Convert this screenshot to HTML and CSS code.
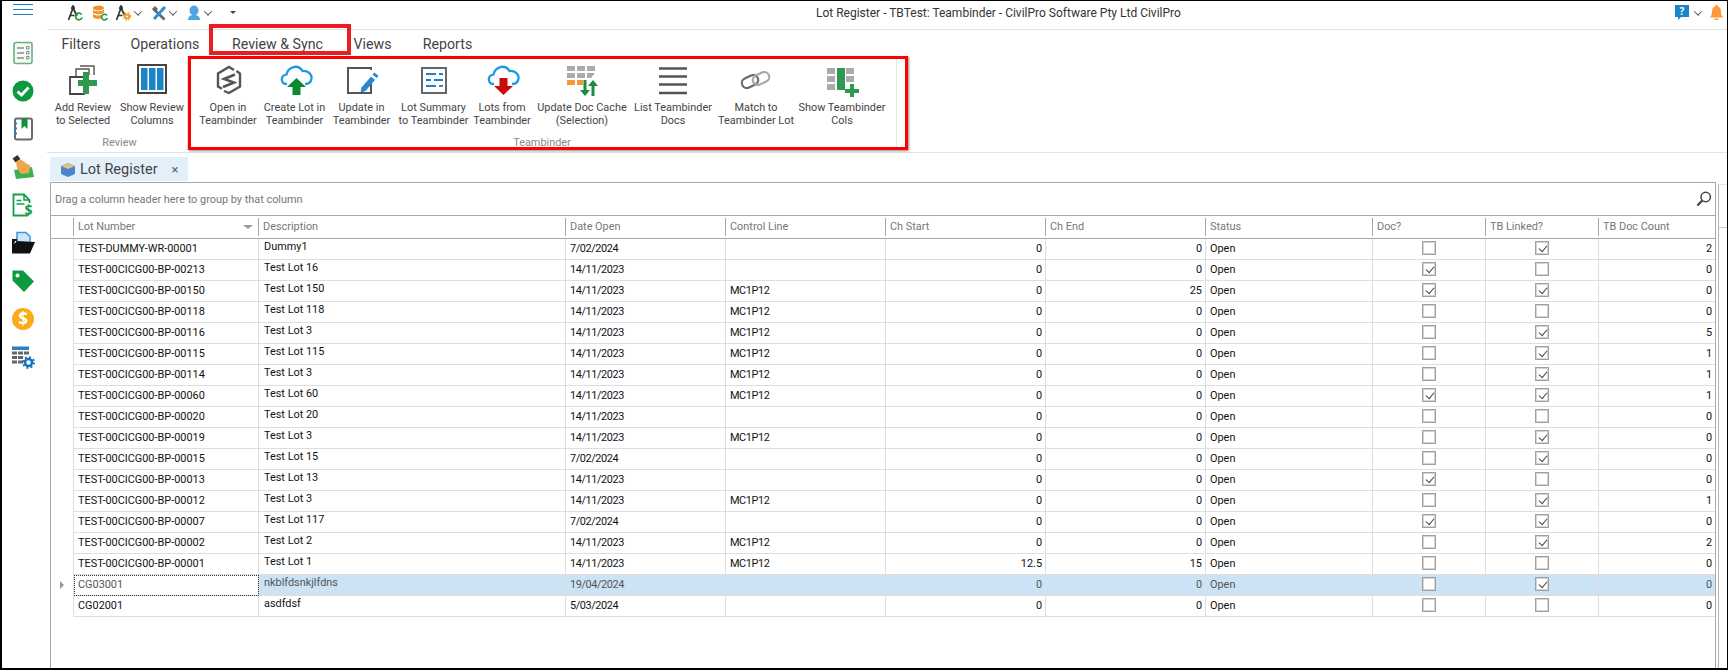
FILE: index.html
```html
<!DOCTYPE html>
<html lang="en">
<head>
<meta charset="utf-8">
<title>Lot Register</title>
<link rel="stylesheet" href="styles.css">
</head>
<body>
<div class="app">
  <aside class="side">
    <div class="burger"><i></i><i></i><i></i></div>
    <div class="nav">
      <svg viewBox="0 0 24 24"><rect x="3" y="1.500" width="18" height="21" rx="2" fill="#f4faf5" stroke="#6cb07e" stroke-width="1.600"/><path d="M6 7h7M6 12h7M6 17h7" stroke="#8a8a8a" stroke-width="1.400"/><path d="M15.500 5.500h2.500v2.500h-2.500zM15.500 10.500h2.500v2.500h-2.500zM15.500 15.500h2.500v2.500h-2.500z" fill="none" stroke="#8a8a8a"/></svg>
    </div>
    <div class="nav">
      <svg viewBox="0 0 24 24"><circle cx="12" cy="12" r="10.500" fill="#0d9a3f"/><path d="M6.500 12.500l4 3.500 7-7.500" fill="none" stroke="#fff" stroke-width="2.800"/></svg>
    </div>
    <div class="nav">
      <svg viewBox="0 0 24 24"><rect x="4" y="1.500" width="17" height="21" rx="2" fill="#fff" stroke="#6a6a6a" stroke-width="2"/><path d="M10.500 2h6v10l-3-3-3 3z" fill="#0d8f3c"/><path d="M3 6.500h3M3 11.500h3M3 16.500h3" stroke="#2a7fc0" stroke-width="2"/></svg>
    </div>
    <div class="nav">
      <svg viewBox="0 0 24 24"><path d="M3 15l18-3 2 10-18 2z" fill="#3bb04f"/><path d="M1.500 3.500L6.500 0l3 4-5 3.500z" fill="#333"/><path d="M5 7l5-2.500 6 4.500 3 1-1 8-8 1-4-6z" fill="#f3a54c"/></svg>
    </div>
    <div class="nav">
      <svg viewBox="0 0 24 24"><path d="M16 20.500v2H2.500V1.500h10.500l5.500 5.500v3" fill="none" stroke="#12a04a" stroke-width="1.800"/><path d="M13 1.500v5.500h5.500" fill="none" stroke="#12a04a" stroke-width="1.500"/><path d="M5.500 7.500h5M5.500 11h8" stroke="#12a04a" stroke-width="1.600"/><text x="13.500" y="21.500" class="dollar-small">$</text></svg>
    </div>
    <div class="nav">
      <svg viewBox="0 0 24 24"><path d="M6 1.500h9l4 4v9H6z" fill="#cfe6f8" stroke="#3f97dc" stroke-width="1.500"/><path d="M1 8h5v2h-2l-1 3 3-3 18 1-5 11.500H1z" fill="#111"/></svg>
    </div>
    <div class="nav">
      <svg viewBox="0 0 24 24"><path d="M1.500 1.500h10.500l11 11-10 10.500-11.500-11.500z" fill="#0d9a3f"/><circle cx="6.500" cy="6.500" r="2" fill="#fff"/></svg>
    </div>
    <div class="nav">
      <svg viewBox="0 0 24 24"><circle cx="12" cy="12" r="11" fill="#fbab18"/><text x="12" y="17.500" class="dollar">$</text></svg>
    </div>
    <div class="nav">
      <svg viewBox="0 0 24 24"><path d="M1 1.500h17v3.500H1z" fill="#2a7fc0"/><path d="M1 6.500h5v3H1zM7 6.500h5v3H7zM13 6.500h5v3h-5zM1 11h5v3H1zM7 11h5v3H7zM1 15.500h5v3H1zM7 15.500h5v3H7z" fill="#666"/><circle cx="17.500" cy="17.500" r="3.500" fill="none" stroke="#1673c4" stroke-width="2.600"/><circle cx="17.500" cy="17.500" r="5.500" fill="none" stroke="#1673c4" stroke-width="1.800" stroke-dasharray="2 2.300"/></svg>
    </div>
  </aside>

  <main class="main">
    <header class="titlebar">
      <div class="qat">
        <svg class="q q-a" viewBox="0 0 16 16"><path d="M6 3L1.500 15M6 3l4 8M3.500 10.500h4" fill="none" stroke="#333" stroke-width="1.700"/><path d="M6 0v3" stroke="#333" stroke-width="1.500"/><circle cx="6" cy="3" r="2" fill="#333"/><path d="M14.500 9.500a3.300 3.300 0 1 0 .5 3" fill="none" stroke="#1a9a3f" stroke-width="1.700"/></svg>
        <svg class="q q-b" viewBox="0 0 16 16"><ellipse cx="6.500" cy="3" rx="5.500" ry="2.500" fill="#f0932c"/><path d="M1 4v3c0 3 11 3 11 0V4c0 3-11 3-11 0zM1 8.500v3c0 2.500 6 3 8 2V10c-3 1-8 .5-8-1.500z" fill="#f0932c"/><path d="M15 10.500a2.900 2.900 0 1 0 .3 2.500" fill="none" stroke="#1a9a3f" stroke-width="1.500"/></svg>
        <svg class="q q-c" viewBox="0 0 16 16"><path d="M6 3L1.500 15M6 3l3.500 7M3.500 10.500h4" fill="none" stroke="#333" stroke-width="1.700"/><path d="M6 0v3" stroke="#333" stroke-width="1.500"/><circle cx="6" cy="3" r="2" fill="#333"/><circle cx="12" cy="11.500" r="2" fill="none" stroke="#f0a020" stroke-width="2"/><circle cx="12" cy="11.500" r="3.700" fill="none" stroke="#f0a020" stroke-width="1.200" stroke-dasharray="1.500 1.500"/></svg>
        <i class="chev chev-c"></i>
        <svg class="q q-d" viewBox="0 0 16 16"><path d="M2.500 4l11 10.500" stroke="#666" stroke-width="2.600"/><path d="M1 4l3-3 3 3-3 3z" fill="#666"/><path d="M13 3L3 14" stroke="#2a8fd6" stroke-width="2.800"/><path d="M10 4l3-3 2 2-3 3z" fill="#2a8fd6"/></svg>
        <i class="chev"></i>
        <svg class="q q-e" viewBox="0 0 16 16"><ellipse cx="8" cy="5.500" rx="4.500" ry="5" fill="#4fa5e2"/><path d="M2 15c0-4 3-5 6-5s6 1 6 5z" fill="#4fa5e2"/></svg>
        <i class="chev"></i>
        <i class="drop"></i>
      </div>
      <div class="title">Lot Register - TBTest: Teambinder - CivilPro Software Pty Ltd CivilPro</div>
      <div class="sys">
        <svg class="help" viewBox="0 0 14 16"><path d="M0 0h14v12H6l-3 3v-3H0z" fill="#1c85c8"/><text x="7" y="10" class="qmark">?</text></svg>
        <i class="chev"></i>
        <svg class="bell" viewBox="0 0 13 15"><path d="M6.500 0c1 0 1.500.7 1.500 1.400C10.500 2 11 4.500 11 7c0 2.500.8 4 2 5.500H0C1.200 11 2 9.500 2 7c0-2.500.5-5 3-5.600C5 .7 5.500 0 6.500 0z" fill="#ff9a3c"/><path d="M4.500 13.500h4V15h-4z" fill="#ff9a3c"/></svg>
      </div>
    </header>

    <nav class="tabs">
      <span class="tab t1">Filters</span>
      <span class="tab t2">Operations</span>
      <span class="tab t3">Review &amp; Sync</span>
      <span class="tab t4">Views</span>
      <span class="tab t5">Reports</span>
    </nav>

    <section class="ribbon">
      <div class="group g1">
        <div class="btns">
          <div class="btn w70">
            <svg viewBox="0 0 36 34"><path d="M11 15V6h13v6" fill="none" stroke="#555" stroke-width="1.400"/><path d="M15 3h14v9" fill="none" stroke="#555" stroke-width="1.400"/><path d="M5 14h14v17H5z" fill="#fff" stroke="#444" stroke-width="1.800"/><path d="M18 9h6v8h8v6h-8v8h-6v-8h-5v-6h5z" fill="#2f9a4f"/></svg>
            <span>Add Review<br>to Selected</span>
          </div>
          <div class="btn w68">
            <svg viewBox="0 0 36 34"><rect x="4" y="2" width="28" height="28" fill="#fff" stroke="#444" stroke-width="2"/><path d="M7 5h6.500v22H7zM15 5h6.500v22H15zM23 5h6.500v22H23z" fill="#1c85c8"/></svg>
            <span>Show Review<br>Columns</span>
          </div>
        </div>
        <div class="glabel">Review</div>
      </div>
      <div class="group g2">
        <div class="btns">
          <div class="btn w66">
            <svg viewBox="0 0 36 34"><path d="M24 7L19 4 8 10.500v13l4 2.300M14 28l5 2 11-6.500v-13L26.500 8" fill="none" stroke="#555" stroke-width="2.400"/><path d="M25 11.500l-11 4.500 10 3.500-11 4.500" fill="none" stroke="#555" stroke-width="2.600"/></svg>
            <span>Open in<br>Teambinder</span>
          </div>
          <div class="btn w67">
            <svg viewBox="0 0 36 34"><path d="M10 21C4 21 2.500 13 9.500 11.500 11 4 21 .5 25.500 8 31 7.500 35 11 34.500 15.500 34 19 31.500 21 28 21" fill="none" stroke="#1b9ae4" stroke-width="2.300"/><path d="M19.500 15L29 24h-5.500v8h-8v-8H10z" fill="#0a8a2e"/></svg>
            <span>Create Lot in<br>Teambinder</span>
          </div>
          <div class="btn w67">
            <svg viewBox="0 0 36 34"><path d="M27 7V5H4v25h23v-9" fill="none" stroke="#555" stroke-width="2"/><path d="M17.500 24.500l9.500-11 4 3.500-9.500 11-5 1.500z" fill="#2a86d0"/><path d="M28.500 11.500l2-2 4 3.500-2 2z" fill="#2a86d0"/></svg>
            <span>Update in<br>Teambinder</span>
          </div>
          <div class="btn w77">
            <svg viewBox="0 0 36 34"><rect x="6" y="5" width="24" height="25" fill="#fff" stroke="#666" stroke-width="2"/><path d="M10 11h10M23 11h4M10 17h5M18 17h9M10 23h10" stroke="#1c7fd0" stroke-width="2"/><path d="M23 23h4" stroke="#777" stroke-width="2"/></svg>
            <span>Lot Summary<br>to Teambinder</span>
          </div>
          <div class="btn w60">
            <svg viewBox="0 0 36 34"><path d="M10 21C4 21 2.500 13 9.500 11.500 11 4 21 .5 25.500 8 31 7.500 35 11 34.500 15.500 34 19 31.500 21 28 21" fill="none" stroke="#1b9ae4" stroke-width="2.300"/><path d="M15.500 15h8v8H29l-9.500 9L10 23h5.500z" fill="#c80b0b"/></svg>
            <span>Lots from<br>Teambinder</span>
          </div>
          <div class="btn w100">
            <svg viewBox="0 0 36 34"><path d="M3 3h8v5H3zM13 3h8v5h-8zM23 3h8v5h-8zM3 10h8v5H3zM13 10h8v5h-8zM23 10h8l-4 5h-4z" fill="#ababab"/><path d="M3 17h8v5H3zM13 17h6v5h-6z" fill="#f39a35"/><path d="M19.500 17h3v10h3.500l-5 6-5-6h3.500z" fill="#1e8a45"/><path d="M29 17l5 6h-3.500v10h-3V23H24z" fill="#1e8a45"/></svg>
            <span>Update Doc Cache<br>(Selection)</span>
          </div>
          <div class="btn w82">
            <svg viewBox="0 0 36 34"><path d="M4 5.500h28M4 13.500h28M4 21.500h28M4 30h28" stroke="#555" stroke-width="2.600"/></svg>
            <span>List Teambinder<br>Docs</span>
          </div>
          <div class="btn w84">
            <svg viewBox="0 0 36 34"><rect x="3.500" y="13.500" width="17" height="10" rx="5" transform="rotate(-25 12 18.500)" fill="none" stroke="#6a6a6a" stroke-width="2.200"/><rect x="14.500" y="10.500" width="17" height="10" rx="5" transform="rotate(-25 23 15.500)" fill="none" stroke="#a8a8a8" stroke-width="2.200"/></svg>
            <span>Match to<br>Teambinder Lot</span>
          </div>
          <div class="btn w88">
            <svg viewBox="0 0 36 34"><path d="M3 5h8v6H3zM3 13h8v6H3zM3 21h8v6H3zM22 5h8v6h-8zM22 13h8v6h-8z" fill="#ababab"/><path d="M13 5h8v22h-8z" fill="#2f9a4f"/><path d="M26 21h4v5h5v4h-5v4h-4v-4h-5v-4h5z" fill="#2f9a4f"/></svg>
            <span>Show Teambinder<br>Cols</span>
          </div>
        </div>
        <div class="glabel">Teambinder</div>
      </div>
    </section>

    <div class="doctab">
      <svg viewBox="0 0 16 16"><path d="M1 5l7-3 7 3v8l-7 3-7-3z" fill="#4f82c8"/><path d="M1 5l7-3 7 3-7 3z" fill="#d8c58c"/></svg>
      <span class="doctab-t">Lot Register</span>
      <span class="doctab-x">×</span>
    </div>

    <div class="work">
      <div class="grid">
        <div class="grouppanel">
          <span>Drag a column header here to group by that column</span>
          <svg class="search" viewBox="0 0 16 16"><circle cx="9.700" cy="6" r="4.700" fill="none" stroke="#444" stroke-width="1.500"/><path d="M6.200 9.500L1.500 14.500" stroke="#444" stroke-width="2.200"/></svg>
        </div>
        <table class="tbl">
          <colgroup>
            <col class="c-ind"><col class="c-lot"><col class="c-desc"><col class="c-160"><col class="c-160"><col class="c-160"><col class="c-160"><col class="c-stat"><col class="c-cb"><col class="c-cb"><col class="c-count">
          </colgroup>
          <thead>
            <tr>
              <th><div class="hc hc-full"></div></th>
              <th><div class="hc">Lot Number<i class="sort"></i></div></th>
              <th><div class="hc">Description</div></th>
              <th><div class="hc">Date Open</div></th>
              <th><div class="hc">Control Line</div></th>
              <th><div class="hc">Ch Start</div></th>
              <th><div class="hc">Ch End</div></th>
              <th><div class="hc">Status</div></th>
              <th><div class="hc">Doc?</div></th>
              <th><div class="hc">TB Linked?</div></th>
              <th><div class="hc hc-last">TB Doc Count</div></th>
            </tr>
          </thead>
          <tbody>
            <tr><td class="ind"></td><td>TEST-DUMMY-WR-00001</td><td class="d"><span>Dummy1</span></td><td>7/02/2024</td><td></td><td class="n">0</td><td class="n">0</td><td>Open</td><td class="c"><i class="cb"></i></td><td class="c"><i class="cb on"></i></td><td class="n">2</td></tr>
            <tr><td class="ind"></td><td>TEST-00CICG00-BP-00213</td><td class="d"><span>Test Lot 16</span></td><td>14/11/2023</td><td></td><td class="n">0</td><td class="n">0</td><td>Open</td><td class="c"><i class="cb on"></i></td><td class="c"><i class="cb"></i></td><td class="n">0</td></tr>
            <tr><td class="ind"></td><td>TEST-00CICG00-BP-00150</td><td class="d"><span>Test Lot 150</span></td><td>14/11/2023</td><td>MC1P12</td><td class="n">0</td><td class="n">25</td><td>Open</td><td class="c"><i class="cb on"></i></td><td class="c"><i class="cb on"></i></td><td class="n">0</td></tr>
            <tr><td class="ind"></td><td>TEST-00CICG00-BP-00118</td><td class="d"><span>Test Lot 118</span></td><td>14/11/2023</td><td>MC1P12</td><td class="n">0</td><td class="n">0</td><td>Open</td><td class="c"><i class="cb"></i></td><td class="c"><i class="cb"></i></td><td class="n">0</td></tr>
            <tr><td class="ind"></td><td>TEST-00CICG00-BP-00116</td><td class="d"><span>Test Lot 3</span></td><td>14/11/2023</td><td>MC1P12</td><td class="n">0</td><td class="n">0</td><td>Open</td><td class="c"><i class="cb"></i></td><td class="c"><i class="cb on"></i></td><td class="n">5</td></tr>
            <tr><td class="ind"></td><td>TEST-00CICG00-BP-00115</td><td class="d"><span>Test Lot 115</span></td><td>14/11/2023</td><td>MC1P12</td><td class="n">0</td><td class="n">0</td><td>Open</td><td class="c"><i class="cb"></i></td><td class="c"><i class="cb on"></i></td><td class="n">1</td></tr>
            <tr><td class="ind"></td><td>TEST-00CICG00-BP-00114</td><td class="d"><span>Test Lot 3</span></td><td>14/11/2023</td><td>MC1P12</td><td class="n">0</td><td class="n">0</td><td>Open</td><td class="c"><i class="cb"></i></td><td class="c"><i class="cb on"></i></td><td class="n">1</td></tr>
            <tr><td class="ind"></td><td>TEST-00CICG00-BP-00060</td><td class="d"><span>Test Lot 60</span></td><td>14/11/2023</td><td>MC1P12</td><td class="n">0</td><td class="n">0</td><td>Open</td><td class="c"><i class="cb on"></i></td><td class="c"><i class="cb on"></i></td><td class="n">1</td></tr>
            <tr><td class="ind"></td><td>TEST-00CICG00-BP-00020</td><td class="d"><span>Test Lot 20</span></td><td>14/11/2023</td><td></td><td class="n">0</td><td class="n">0</td><td>Open</td><td class="c"><i class="cb"></i></td><td class="c"><i class="cb"></i></td><td class="n">0</td></tr>
            <tr><td class="ind"></td><td>TEST-00CICG00-BP-00019</td><td class="d"><span>Test Lot 3</span></td><td>14/11/2023</td><td>MC1P12</td><td class="n">0</td><td class="n">0</td><td>Open</td><td class="c"><i class="cb"></i></td><td class="c"><i class="cb on"></i></td><td class="n">0</td></tr>
            <tr><td class="ind"></td><td>TEST-00CICG00-BP-00015</td><td class="d"><span>Test Lot 15</span></td><td>7/02/2024</td><td></td><td class="n">0</td><td class="n">0</td><td>Open</td><td class="c"><i class="cb"></i></td><td class="c"><i class="cb on"></i></td><td class="n">0</td></tr>
            <tr><td class="ind"></td><td>TEST-00CICG00-BP-00013</td><td class="d"><span>Test Lot 13</span></td><td>14/11/2023</td><td></td><td class="n">0</td><td class="n">0</td><td>Open</td><td class="c"><i class="cb on"></i></td><td class="c"><i class="cb"></i></td><td class="n">0</td></tr>
            <tr><td class="ind"></td><td>TEST-00CICG00-BP-00012</td><td class="d"><span>Test Lot 3</span></td><td>14/11/2023</td><td>MC1P12</td><td class="n">0</td><td class="n">0</td><td>Open</td><td class="c"><i class="cb"></i></td><td class="c"><i class="cb on"></i></td><td class="n">1</td></tr>
            <tr><td class="ind"></td><td>TEST-00CICG00-BP-00007</td><td class="d"><span>Test Lot 117</span></td><td>7/02/2024</td><td></td><td class="n">0</td><td class="n">0</td><td>Open</td><td class="c"><i class="cb on"></i></td><td class="c"><i class="cb on"></i></td><td class="n">0</td></tr>
            <tr><td class="ind"></td><td>TEST-00CICG00-BP-00002</td><td class="d"><span>Test Lot 2</span></td><td>14/11/2023</td><td>MC1P12</td><td class="n">0</td><td class="n">0</td><td>Open</td><td class="c"><i class="cb"></i></td><td class="c"><i class="cb on"></i></td><td class="n">2</td></tr>
            <tr><td class="ind"></td><td>TEST-00CICG00-BP-00001</td><td class="d"><span>Test Lot 1</span></td><td>14/11/2023</td><td>MC1P12</td><td class="n">12.5</td><td class="n">15</td><td>Open</td><td class="c"><i class="cb"></i></td><td class="c"><i class="cb"></i></td><td class="n">0</td></tr>
            <tr class="sel"><td class="ind"><i class="rowptr"></i></td><td class="focus">CG03001</td><td class="d"><span>nkblfdsnkjlfdns</span></td><td>19/04/2024</td><td></td><td class="n">0</td><td class="n">0</td><td>Open</td><td class="c"><i class="cb"></i></td><td class="c"><i class="cb on"></i></td><td class="n">0</td></tr>
            <tr><td class="ind"></td><td>CG02001</td><td class="d"><span>asdfdsf</span></td><td>5/03/2024</td><td></td><td class="n">0</td><td class="n">0</td><td>Open</td><td class="c"><i class="cb"></i></td><td class="c"><i class="cb"></i></td><td class="n">0</td></tr>
          </tbody>
        </table>
      </div>
      <div class="rail"><div class="rail-top"></div></div>
    </div>
  </main>

  <div class="mark mark-tab"></div>
  <div class="mark mark-group"></div>
</div>
</body>
</html>
```

FILE: styles.css
```css
* { box-sizing: border-box; }
html, body { margin: 0; padding: 0; }
body { width: 1728px; height: 670px; overflow: hidden; background: #000; font-family: Roboto, "Open Sans", "Liberation Sans", sans-serif; font-size: 10.900px; color: #111; }

.app { position: relative; height: 667px; margin: 1px 0 0 2px; width: 1725px; background: #fff; display: flex; }

.side { width: 45px; flex: none; padding-right: 3px; display: flex; flex-direction: column; align-items: center; }
.burger { height: 33px; width: 100%; padding: 3px 0 0 11px; }
.burger i { display: block; width: 20px; height: 1px; background: #1c7fc7; margin-bottom: 4px; }
.nav { height: 38px; flex: none; display: flex; align-items: center; justify-content: center; }
.nav svg { width: 24px; height: 24px; display: block; }
.dollar { font: 700 17px "Open Sans", sans-serif; fill: #fff; text-anchor: middle; }
.dollar-small { font: 700 14px "Open Sans", sans-serif; fill: #12a04a; }

.main { flex: 1; min-width: 0; display: flex; flex-direction: column; }

.titlebar { height: 29px; flex: none; border-bottom: 1px solid #e2e2e2; display: flex; align-items: center; padding-bottom: 5px; position: relative; }
.qat { display: flex; align-items: center; padding-left: 20px; width: 769px; flex: none; }
.q { width: 16px; height: 16px; display: block; flex: none; }
.q-b { margin-left: 9px; }
.q-c { margin-left: 7px; }
.q-d { margin-left: 10px; }
.q-e { margin-left: 10px; }
.chev { width: 6px; height: 6px; border-right: 1.500px solid #555; border-bottom: 1.500px solid #555; transform: rotate(45deg) translate(-1px, -1px); margin-left: 3px; flex: none; display: block; }
.chev-c { margin-left: 4px; }
.drop { width: 0; height: 0; border: 3px solid transparent; border-top: 3px solid #444; border-bottom: 0; margin-left: 19px; display: block; }
.title { color: #333; font-size: 12px; white-space: nowrap; }
.sys { margin-left: auto; display: flex; align-items: center; padding-right: 4px; }
.help { width: 14px; height: 16px; display: block; }
.qmark { font: 700 10px "Open Sans", sans-serif; fill: #fff; text-anchor: middle; }
.sys .chev { margin: 0 9px 0 6px; }
.bell { width: 13px; height: 15px; display: block; }

.tabs { height: 26px; flex: none; display: flex; align-items: center; font-size: 14.200px; color: #444; padding-top: 2px; }
.tab { display: block; white-space: nowrap; text-align: center; }
.t1 { width: 68px; }
.t2 { width: 100px; }
.t3 { width: 125px; }
.t4 { width: 65px; }
.t5 { width: 85px; }

.ribbon { height: 97px; flex: none; display: flex; border-bottom: 1px solid #e2e2e2; }
.group { display: flex; flex-direction: column; border-right: 1px solid #e6e6e6; margin-bottom: 2px; }
.g1 { width: 141px; padding-left: 1px; }
.g2 { width: 709px; padding-left: 7px; }
.btns { display: flex; flex: 1; }
.btn { display: flex; flex-direction: column; align-items: center; padding-top: 7px; color: #444; font-size: 10.900px; line-height: 13px; text-align: center; white-space: nowrap; }
.btn svg { width: 36px; height: 34px; display: block; margin-bottom: 4px; }
.w60 { width: 60px; }
.w66 { width: 66px; }
.w67 { width: 67px; }
.w68 { width: 68px; }
.w70 { width: 70px; }
.w77 { width: 77px; }
.w82 { width: 82px; }
.w84 { width: 84px; }
.w88 { width: 88px; }
.w100 { width: 100px; }
.glabel { text-align: center; color: #888; font-size: 10.900px; line-height: 14px; height: 14px; }
.g1 .glabel { padding-left: 4px; }
.g2 .glabel { margin-left: -7px; }

.doctab { margin: 4px 0 1px 3px; height: 24px; width: 138px; flex: none; background: #e3f0fa; display: flex; align-items: center; padding-left: 10px; }
.doctab svg { width: 16px; height: 16px; display: block; flex: none; }
.doctab-t { font-size: 14.500px; color: #444; margin-left: 4px; }
.doctab-x { margin-left: 14px; color: #666; font-size: 13px; }

.work { flex: 1; min-height: 0; display: flex; gap: 2px; padding-left: 3px; }
.grid { width: 1666px; flex: none; border: 1px solid #a8a8a8; border-bottom: 0; overflow: hidden; }
.grouppanel { height: 33px; border-bottom: 1px solid #a8a8a8; display: flex; align-items: center; justify-content: space-between; padding: 0 3px 0 4px; color: #777; }
.search { width: 16px; height: 16px; display: block; }

.tbl { table-layout: fixed; width: 1664px; border-collapse: separate; border-spacing: 0; }
.c-ind { width: 23px; }
.c-lot { width: 185px; }
.c-desc { width: 307px; }
.c-160 { width: 160px; }
.c-stat { width: 167px; }
.c-cb { width: 113px; }
.c-count { width: 116px; }
th { padding: 2px 0; height: 23px; border-bottom: 1px solid #a8a8a8; font-weight: 400; text-align: left; color: #777; }
.hc { height: 18px; line-height: 18px; border-right: 1px solid #a8a8a8; padding-left: 4px; white-space: nowrap; position: relative; }
.hc-last { border-right: 0; }
.sort { position: absolute; right: 5px; top: 7px; width: 0; height: 0; border: 5px solid transparent; border-top: 4px solid #999; border-bottom: 0; }
td { height: 21px; padding: 0 0 0 4px; border-right: 1px solid #dedede; border-bottom: 1px solid #dedede; white-space: nowrap; overflow: hidden; line-height: 20px; color: #111; }
td:nth-child(4), td:nth-child(5) { letter-spacing: -.4px; }
td.ind { border-bottom: 0; position: relative; padding: 0; }
td.d { padding-left: 5px; }
td.d span { display: block; margin-top: -4px; }
td.n { text-align: right; padding: 0 3px 0 0; }
td.c { text-align: center; padding: 0; }
td:last-child { border-right: 0; }
.cb { display: inline-block; width: 14px; height: 14px; border: 1px solid #a0a0a0; box-shadow: inset 0 0 0 1px #d4d4d4; background: #fff; position: relative; vertical-align: middle; margin-top: -2px; }
.cb.on::after { content: ""; position: absolute; left: 3px; top: 3px; width: 7px; height: 4px; border-left: 1.500px solid #444; border-bottom: 1.500px solid #444; transform: rotate(-50deg); }
tr.sel td { background: #cbe3f5; color: #555; }
tr.sel td.ind { background: #fff; }
tr.sel td.focus { background: #fff; outline: 1px dotted #333; outline-offset: -1px; }
.rowptr { position: absolute; left: 9px; top: 6px; width: 0; height: 0; border: 4px solid transparent; border-left: 4px solid #999; border-right: 0; }

.rail { flex: 1; margin-top: 2px; border-left: 1px solid #b4b4b4; border-top: 1px solid #e6e6e6; }
.rail-top { height: 43px; border-bottom: 1px solid #c8c8c8; }

.mark { position: absolute; pointer-events: none; }
.mark-tab { left: 207px; top: 23px; width: 142px; height: 31px; border: 4px solid #ed1c24; }
.mark-group { left: 186px; top: 55px; width: 720px; height: 94px; border: 3px solid #ff0000; box-shadow: 1px 1px 2px rgba(0,0,0,.45); }
```
